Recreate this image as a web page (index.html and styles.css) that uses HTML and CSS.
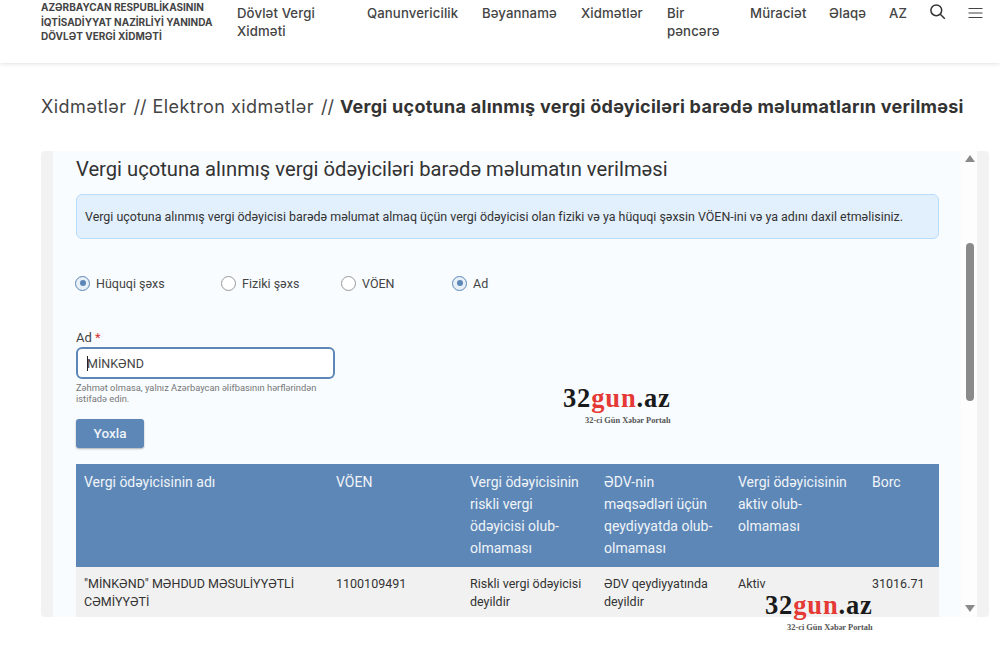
FILE: index.html
```html
<!DOCTYPE html>
<html lang="az">
<head>
<meta charset="utf-8">
<title>Vergi uçotuna alınmış vergi ödəyiciləri</title>
<link rel="stylesheet" href="styles.css">
</head>
<body>
<header class="site-header">
  <div class="brand">AZƏRBAYCAN RESPUBLİKASININ<br>İQTİSADİYYAT NAZİRLİYİ YANINDA<br>DÖVLƏT VERGİ XİDMƏTİ</div>
  <nav class="nav">
    <a class="nav-item w-dvx">Dövlət Vergi Xidməti</a>
    <a class="nav-item w-qan">Qanunvericilik</a>
    <a class="nav-item w-bey">Bəyannamə</a>
    <a class="nav-item w-xid">Xidmətlər</a>
    <a class="nav-item w-bir">Bir pəncərə</a>
    <a class="nav-item w-mur">Müraciət</a>
    <a class="nav-item w-ela">Əlaqə</a>
    <a class="nav-item w-az">AZ</a>
    <svg class="nav-icon search" width="16" height="16" viewBox="0 0 16 16" fill="none" stroke="#333" stroke-width="1.5"><circle cx="6.3" cy="6.3" r="5.4"/><path d="M10.3 10.3 14.8 14.8"/></svg>
    <svg class="nav-icon menu" width="15" height="12" viewBox="0 0 15 12" fill="none" stroke="#444" stroke-width="1.2"><path d="M0.5 1.5h14M0.5 6h14M0.5 10.5h14"/></svg>
  </nav>
</header>

<div class="crumbs">
  <span>Xidmətlər</span><span class="sep">//</span><span>Elektron xidmətlər</span><span class="sep">//</span><strong>Vergi uçotuna alınmış vergi ödəyiciləri barədə məlumatların verilməsi</strong>
</div>

<main class="panel">
  <div class="scroll">
    <h1 class="title">Vergi uçotuna alınmış vergi ödəyiciləri barədə məlumatın verilməsi</h1>
    <div class="alert">Vergi uçotuna alınmış vergi ödəyicisi barədə məlumat almaq üçün vergi ödəyicisi olan fiziki və ya hüquqi şəxsin VÖEN-ini və ya adını daxil etməlisiniz.</div>

    <div class="radios">
      <label class="radio r1"><span class="dot on"></span>Hüquqi şəxs</label>
      <label class="radio r2"><span class="dot"></span>Fiziki şəxs</label>
      <label class="radio r3"><span class="dot"></span>VÖEN</label>
      <label class="radio"><span class="dot on"></span>Ad</label>
    </div>

    <div class="field">
      <div class="field-label">Ad <span class="req">*</span></div>
      <div class="input"><span class="caret"></span>MİNKƏND</div>
      <div class="hint">Zəhmət olmasa, yalnız Azərbaycan əlifbasının hərflərindən istifadə edin.</div>
    </div>

    <div class="btn">Yoxla</div>

    <table class="grid">
      <colgroup><col class="c1"><col class="c2"><col class="c3"><col class="c3"><col class="c3"><col></colgroup>
      <thead>
        <tr>
          <th>Vergi ödəyicisinin adı</th>
          <th>VÖEN</th>
          <th>Vergi ödəyicisinin riskli vergi ödəyicisi olub-olmaması</th>
          <th>ƏDV-nin məqsədləri üçün qeydiyyatda olub-olmaması</th>
          <th>Vergi ödəyicisinin aktiv olub-olmaması</th>
          <th>Borc</th>
        </tr>
      </thead>
      <tbody>
        <tr>
          <td>"MİNKƏND" MƏHDUD MƏSULİYYƏTLİ CƏMİYYƏTİ</td>
          <td>1100109491</td>
          <td>Riskli vergi ödəyicisi deyildir</td>
          <td>ƏDV qeydiyyatında deyildir</td>
          <td>Aktiv</td>
          <td>31016.71</td>
        </tr>
      </tbody>
    </table>
  </div>
  <div class="scrollbar">
    <span class="arrow up"></span>
    <span class="thumb"></span>
    <span class="arrow down"></span>
  </div>
</main>

<div class="mark mark-a"><div class="mark-name">32<span class="red">gun</span>.az</div><div class="mark-sub">32-ci Gün Xəbər Portalı</div></div>
<div class="mark mark-b"><div class="mark-name">32<span class="red">gun</span>.az</div><div class="mark-sub">32-ci Gün Xəbər Portalı</div></div>
</body>
</html>
```

FILE: styles.css
```css
* { box-sizing: border-box; }
html, body { margin: 0; padding: 0; height: 648px; overflow: hidden; background: #fff; }
body { font-family: Roboto, "Liberation Sans", sans-serif; color: #333; position: relative; }

.site-header {
  height: 63px;
  display: flex;
  padding: 0 0 0 41px;
  background: #fff;
  box-shadow: 0 1px 4px rgba(0,0,0,.12);
  overflow: hidden;
}
.brand {
  width: 196px;
  flex: none;
  font: 700 10px/14.5px "Inter", sans-serif;
  color: #444;
}
.nav {
  display: flex;
  align-items: flex-start;
  font: 500 13.2px/18px "Inter", sans-serif;
  color: #444;
  padding-top: 4px;
}
.nav-item { display: block; flex: none; letter-spacing: .1px; }
.w-dvx { width: 130px; }
.w-qan { width: 115px; }
.w-bey { width: 99px; }
.w-xid { width: 86px; }
.w-bir { width: 59px; margin-right: 24px; }
.w-mur { width: 79px; }
.w-ela { width: 60px; }
.w-az { width: 41px; }
.nav-icon { flex: none; display: block; }
.search { margin-right: 22px; }
.menu { margin-top: 3px; }

.crumbs {
  display: flex;
  align-items: center;
  padding: 0 0 0 41px;
  margin-top: 33px;
  height: 22px;
  font: 400 18px/22px "Inter", sans-serif;
  letter-spacing: .45px;
  color: #444;
  white-space: nowrap;
}
.crumbs .sep { margin: 0 6px 0 7px; letter-spacing: 0; }
.crumbs strong { font-weight: 700; color: #333; letter-spacing: .27px; }

.panel {
  position: relative;
  margin: 33px 0 0 41px;
  width: 948px;
  height: 466px;
  background: #f2f2f2;
  border-radius: 4px;
  padding: 0 12px;
}
.scroll {
  height: 466px;
  overflow: hidden;
  background: #f8fcff;
  padding: 5px 38px 0 23px;
}
.title {
  margin: 0;
  font: 400 20.2px/26px Roboto, sans-serif;
  color: #333;
}
.alert {
  margin-top: 12px;
  height: 45px;
  padding: 0 8px;
  display: flex;
  align-items: center;
  font-size: 12.44px;
  color: #333;
  background: #e2effc;
  border: 1px solid #b8dcfb;
  border-radius: 6px;
}
.radios {
  display: flex;
  margin: 36px 0 0 -1px;
  height: 16px;
  align-items: center;
  font-size: 12.5px;
  color: #444;
}
.radio { display: flex; align-items: center; }
.r1 { width: 146px; }
.r2 { width: 120px; }
.r3 { width: 111px; }
.dot {
  width: 15px;
  height: 15px;
  margin-right: 6px;
  border: 1px solid #999;
  border-radius: 50%;
  background: #fff;
  display: block;
  position: relative;
}
.dot.on { border-color: #5d87b7; background: #e7eff7; }
.dot.on::after {
  content: "";
  position: absolute;
  left: 3.5px;
  top: 3.5px;
  width: 6px;
  height: 6px;
  border-radius: 50%;
  background: #5d87b7;
}
.field { margin-top: 39px; width: 259px; }
.field-label { font-size: 13px; line-height: 16px; color: #444; }
.req { color: #d33; }
.input {
  margin-top: 1px;
  height: 32px;
  border: 2px solid #5d87b7;
  border-radius: 6px;
  background: #fff;
  display: flex;
  align-items: center;
  padding-left: 9px;
  font-size: 12.5px;
  color: #444;
}
.caret { width: 1px; height: 15px; background: #222; margin-right: -1px; }
.hint {
  margin-top: 3px;
  font-size: 9.33px;
  line-height: 11px;
  color: #777;
}
.btn {
  margin-top: 15px;
  width: 68px;
  height: 29px;
  padding-bottom: 2px;
  display: flex;
  align-items: center;
  justify-content: center;
  background: #5d87b7;
  color: #eef3f8;
  font-size: 13.5px;
  font-weight: 500;
  border-radius: 3px;
  box-shadow: 0 1px 2px rgba(0,0,0,.3);
}
.grid {
  margin-top: 16px;
  width: 863px;
  table-layout: fixed;
  border-collapse: collapse;
  font-size: 12.5px;
}
.c1 { width: 252px; }
.c2 { width: 134px; }
.c3 { width: 134px; }
.grid th {
  background: #5d87b7;
  color: #f0f4f8;
  font-weight: 400;
  font-size: 14px;
  line-height: 22px;
  text-align: left;
  vertical-align: top;
  padding: 7px 8px 8px;
}
.grid td {
  background: #f1f1f1;
  color: #333;
  line-height: 18px;
  vertical-align: top;
  padding: 8px;
}

.scrollbar {
  position: absolute;
  right: 12px;
  top: 0;
  bottom: 0;
  width: 16px;
  background: #fdfdfd;
}
.thumb {
  position: absolute;
  left: 5px;
  top: 92px;
  width: 8px;
  height: 158px;
  border-radius: 4px;
  background: #8a8a8a;
}
.arrow { position: absolute; left: 4px; width: 0; height: 0; border-left: 5px solid transparent; border-right: 5px solid transparent; }
.up { top: 4px; border-bottom: 7px solid #8a8a8a; }
.down { bottom: 5px; border-top: 7px solid #8a8a8a; }

.mark { position: absolute; width: 120px; font-family: "Liberation Serif", serif; }
.mark-name { font-size: 26.5px; line-height: 30px; font-weight: 700; color: #1a1a1a; letter-spacing: .85px; }
.red { color: #e53935; }
.mark-sub { font-size: 8.4px; line-height: 10px; font-weight: 700; color: #555; padding-left: 22px; margin-top: 3px; }
.mark-a { left: 563px; top: 383px; }
.mark-b { left: 765px; top: 590px; }
```
